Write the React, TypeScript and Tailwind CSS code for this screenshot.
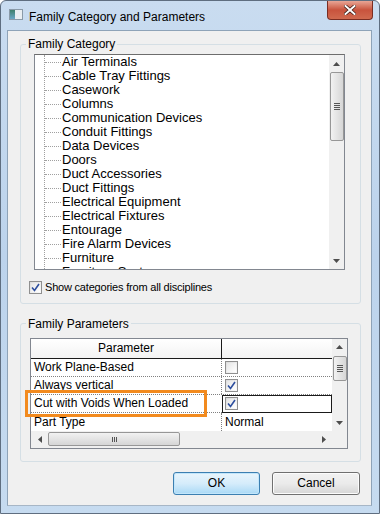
import React from 'react';

const categories = [
  'Air Terminals',
  'Cable Tray Fittings',
  'Casework',
  'Columns',
  'Communication Devices',
  'Conduit Fittings',
  'Data Devices',
  'Doors',
  'Duct Accessories',
  'Duct Fittings',
  'Electrical Equipment',
  'Electrical Fixtures',
  'Entourage',
  'Fire Alarm Devices',
  'Furniture',
  'Furniture Systems',
];

const Check: React.FC<{ checked?: boolean }> = ({ checked }) => (
  <div className="w-[13px] h-[13px] border border-[#8f8f8f] bg-gradient-to-br from-[#dcdcdc] to-[#fbfbfb] p-[1px] flex items-center justify-center">
    <div className="w-full h-full bg-gradient-to-br from-[#e6e6e6] to-[#ffffff] flex items-center justify-center">
      {checked && (
        <svg width="9" height="9" viewBox="0 0 9 9">
          <path d="M1 4.5 L3.5 7.5 L8 1" fill="none" stroke="#2d4e9e" strokeWidth="1.6" />
        </svg>
      )}
    </div>
  </div>
);

const Arrow: React.FC<{ dir: 'up' | 'down' | 'left' | 'right' }> = ({ dir }) => {
  const pts = {
    up: '0,4 7,4 3.5,0',
    down: '0,0 7,0 3.5,4',
    left: '4,0 4,7 0,3.5',
    right: '0,0 0,7 4,3.5',
  }[dir];
  const vertical = dir === 'up' || dir === 'down';
  return (
    <svg width={vertical ? 7 : 4} height={vertical ? 4 : 7} viewBox={vertical ? '0 0 7 4' : '0 0 4 7'}>
      <polygon points={pts} fill="#4d4d4d" />
    </svg>
  );
};

const Grip: React.FC<{ vertical?: boolean }> = ({ vertical }) =>
  vertical ? (
    <div className="flex flex-col gap-[1px]">
      <div className="w-[6px] h-[1px] bg-[#555]" />
      <div className="w-[6px] h-[1px] bg-[#555]" />
      <div className="w-[6px] h-[1px] bg-[#555]" />
      <div className="w-[6px] h-[1px] bg-[#555]" />
    </div>
  ) : (
    <div className="flex gap-[1px]">
      <div className="w-[1px] h-[5px] bg-[#555]" />
      <div className="w-[1px] h-[5px] bg-[#555]" />
      <div className="w-[1px] h-[5px] bg-[#555]" />
    </div>
  );

export default function App() {
  return (
    <div
      className="w-[380px] h-[514px] flex flex-col bg-gradient-to-b from-[#c9dcf0] via-[#bcd3ec] to-[#c6dbf0] border border-[#5f6e80] rounded-t-[6px] overflow-hidden"
      style={{ fontFamily: '"Liberation Sans", Arial, sans-serif' }}
    >
      {/* title bar */}
      <div className="h-[29px] flex items-start shrink-0">
        <div className="ml-[8px] mt-[8px] w-[14px] h-[11px] border border-[#8a9aa8] bg-[#dfe8f0] flex">
          <div className="w-[5px] h-full bg-gradient-to-b from-[#3d7f6c] to-[#6ba8c8]" />
          <div className="flex-1 bg-[#e9eef2]" />
        </div>
        <div className="ml-[6px] mt-[7px] text-[12px] text-black">Family Category and Parameters</div>
        <div className="ml-auto mr-[6px] w-[46px] h-[19px] rounded-b-[4px] border border-t-0 border-[#7a2d22] bg-gradient-to-b from-[#e8a595] via-[#c8533d] to-[#d06a4f] flex items-center justify-center">
          <svg width="12" height="10" viewBox="0 0 12 10">
            <path d="M1.5 1 L10.5 9 M10.5 1 L1.5 9" stroke="#3a1a14" strokeWidth="3.4" strokeLinecap="square" />
            <path d="M1.5 1 L10.5 9 M10.5 1 L1.5 9" stroke="#ffffff" strokeWidth="2" strokeLinecap="square" />
          </svg>
        </div>
      </div>

      {/* client */}
      <div className="flex-1 flex ml-[6px] mr-[7px] mb-[7px]">
        <div className="flex-1 flex flex-col bg-[#f0f0f0] border border-[#8ea3b8] border-b-[#a7b6c6]">
          <fieldset className="ml-[12px] mr-[10px] mt-[6px] border border-[#d5dfe5] rounded-[3px] pl-[13px] pr-[15px] pb-[7px]">
            <legend className="-ml-[8px] px-[2px] text-[12px] leading-[14px] text-black">Family Category</legend>
            <div className="mt-[3px] h-[216px] border border-[#828790] border-t-[#6d6d6d] bg-white flex">
              <div className="flex-1 relative overflow-hidden">
                <div className="absolute left-[9px] top-0 bottom-0 border-l border-dotted border-[#a0a0a0]" />
                {categories.map((c) => (
                  <div key={c} className="h-[14px] flex items-center">
                    <div className="ml-[10px] w-[16px] border-t border-dotted border-[#a0a0a0]" />
                    <span className="ml-[1px] text-[13px] leading-[14px] text-black whitespace-nowrap">{c}</span>
                  </div>
                ))}
              </div>
              <div className="w-[15px] bg-[#f0f0f0] flex flex-col items-center">
                <div className="h-[17px] flex items-center justify-center">
                  <Arrow dir="up" />
                </div>
                <div className="w-[14px] h-[69px] rounded-[2px] border border-[#979797] bg-gradient-to-r from-[#f2f2f2] to-[#d6d6d6] flex items-center justify-center">
                  <Grip vertical />
                </div>
                <div className="flex-1" />
                <div className="h-[17px] flex items-center justify-center">
                  <Arrow dir="down" />
                </div>
              </div>
            </div>
            <div className="mt-[9px] flex items-center gap-[3px] -ml-[5px]">
              <Check checked />
              <span className="text-[11px] tracking-[-0.2px] text-black">Show categories from all disciplines</span>
            </div>
          </fieldset>

          <fieldset className="ml-[12px] mr-[10px] mt-[13px] border border-[#d5dfe5] rounded-[3px] pl-[9px] pr-[12px] pb-[12px]">
            <legend className="-ml-[4px] px-[2px] text-[12px] leading-[14px] text-black">Family Parameters</legend>
            <div className="mt-[7px] border border-[#828790] bg-white flex flex-col text-[12px] text-black">
              <div className="flex h-[92px]">
                <div className="flex-1 flex flex-col">
                  <div className="h-[21px] flex border-b border-[#1a1a1a] bg-gradient-to-b from-[#ffffff] to-[#f3f3f3]">
                    <div className="w-[191px] flex items-center justify-center border-r border-[#1a1a1a]">Parameter</div>
                    <div className="flex-1" />
                  </div>
                  <div className="h-[18px] flex border-b border-dotted border-[#808080]">
                    <div className="w-[191px] px-[3px] flex items-center border-r border-dotted border-[#808080]">Work Plane-Based</div>
                    <div className="flex-1 pl-[3px] flex items-center"><Check /></div>
                  </div>
                  <div className="h-[18px] flex border-b border-dotted border-[#808080]">
                    <div className="w-[191px] px-[3px] flex items-center border-r border-dotted border-[#808080]">Always vertical</div>
                    <div className="flex-1 pl-[3px] flex items-center"><Check checked /></div>
                  </div>
                  <div className="h-[18px] flex border-b border-dotted border-[#808080]">
                    <div className="w-[191px] px-[3px] flex items-center relative">
                      Cut with Voids When Loaded
                      <div className="absolute -left-[6px] -top-[5px] w-[182px] h-[27px] border-[3px] border-[#f28a1e] pointer-events-none" />
                    </div>
                    <div className="flex-1 pl-[2px] flex items-center border border-[#1a1a1a] -mb-[1px] relative"><Check checked /></div>
                  </div>
                  <div className="flex-1 flex">
                    <div className="w-[191px] px-[3px] flex items-center border-r border-dotted border-[#808080]">Part Type</div>
                    <div className="flex-1 pl-[3px] flex items-center">Normal</div>
                  </div>
                </div>
                <div className="w-[15px] bg-[#f0f0f0] flex flex-col items-center">
                  <div className="h-[17px] flex items-center justify-center">
                    <Arrow dir="up" />
                  </div>
                  <div className="w-[14px] h-[25px] rounded-[2px] border border-[#979797] bg-gradient-to-r from-[#f2f2f2] to-[#d6d6d6] flex items-center justify-center">
                    <Grip vertical />
                  </div>
                  <div className="flex-1" />
                  <div className="h-[16px] flex items-center justify-center">
                    <Arrow dir="down" />
                  </div>
                </div>
              </div>
              <div className="h-[17px] flex bg-[#f0f0f0]">
                <div className="flex-1 flex items-center">
                  <div className="w-[17px] flex justify-center"><Arrow dir="left" /></div>
                  <div className="w-[132px] h-[14px] rounded-[2px] border border-[#979797] bg-gradient-to-b from-[#f2f2f2] to-[#d6d6d6] flex items-center justify-center">
                    <Grip />
                  </div>
                  <div className="flex-1" />
                  <div className="w-[17px] flex justify-center"><Arrow dir="right" /></div>
                </div>
                <div className="w-[15px]" />
              </div>
            </div>
          </fieldset>

          <div className="mt-[10px] flex justify-end gap-[12px] mr-[11px]">
            <button className="w-[87px] h-[23px] rounded-[3px] border border-[#3c7fb1] bg-gradient-to-b from-[#e9f5fc] via-[#d5ecfb] to-[#a9d9f6] shadow-[inset_0_0_0_1px_#c2e6fb] text-[12px] text-black">
              OK
            </button>
            <button className="w-[88px] h-[23px] rounded-[3px] border border-[#707070] bg-gradient-to-b from-[#f2f2f2] via-[#ebebeb] to-[#d6d6d6] shadow-[inset_0_0_0_1px_#fcfcfc] text-[12px] text-black">
              Cancel
            </button>
          </div>
        </div>
      </div>
    </div>
  );
}
